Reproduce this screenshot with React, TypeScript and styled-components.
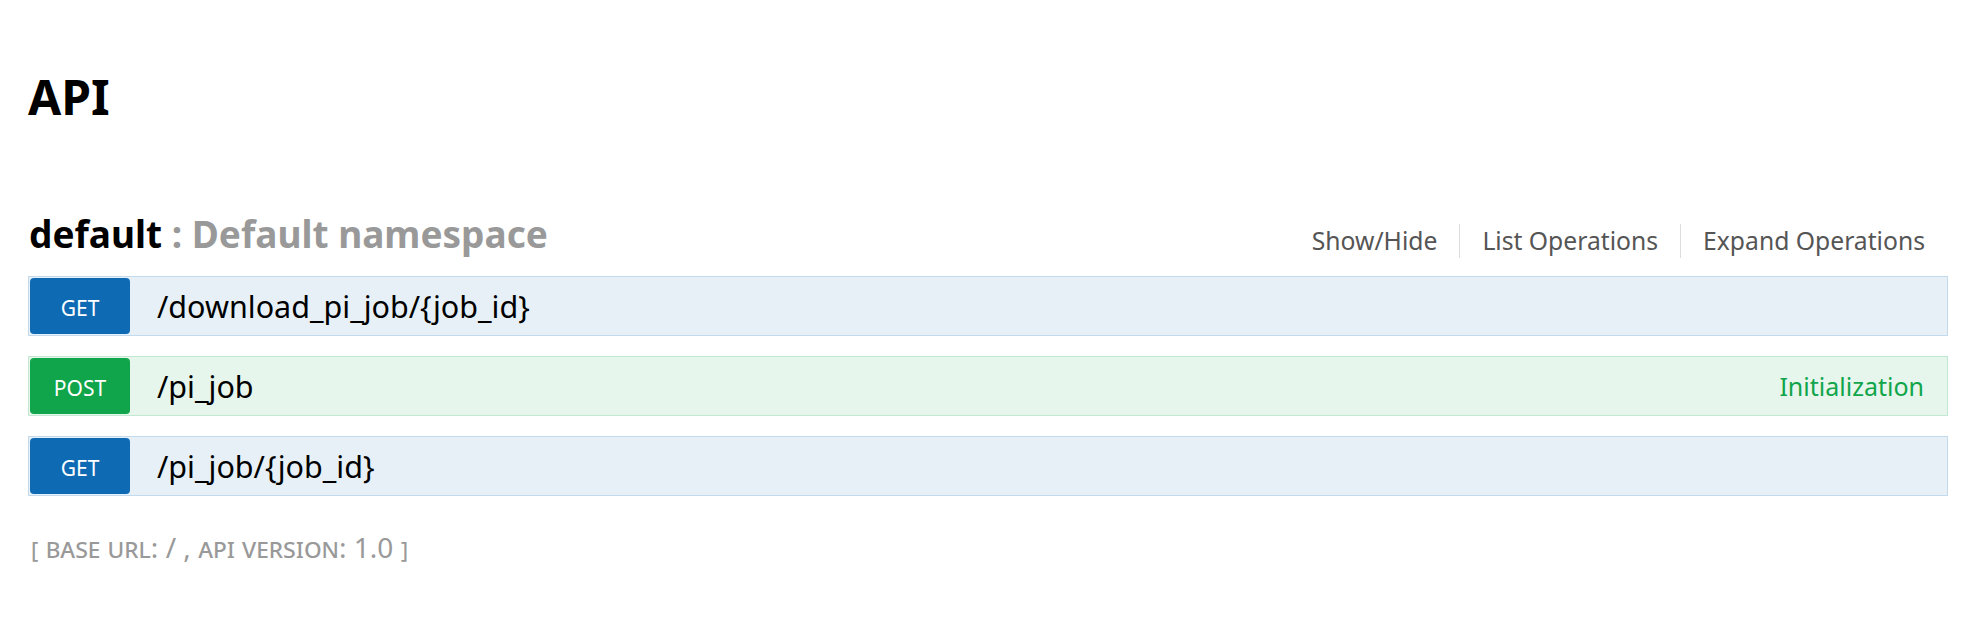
import React from "react";
import styled, { createGlobalStyle } from "styled-components";

const GlobalStyle = createGlobalStyle`
  html, body {
    margin: 0;
    padding: 0;
    background: #ffffff;
  }
  body {
    font-family: "Noto Sans", "Open Sans", "DejaVu Sans", sans-serif;
    color: #000;
  }
`;

const Wrap = styled.div`
  padding: 67px 36px 0 28px;
`;

const Title = styled.h1`
  margin: 0;
  font-size: 48px;
  line-height: 60px;
  font-weight: 700;
  color: #000;
`;

const ResourceHeader = styled.div`
  margin-top: 82px;
  display: flex;
  justify-content: space-between;
  align-items: flex-end;
`;

const ResourceName = styled.h2`
  margin: 0;
  font-size: 37px;
  line-height: 50px;
  font-weight: 700;
  color: #000;
  padding-left: 1px;
`;

const Namespace = styled.span`
  color: #999;
`;

const Options = styled.ul`
  list-style: none;
  margin: 0 23px 1px 0;
  padding: 0;
  display: flex;
`;

const Option = styled.li<{ $last?: boolean }>`
  font-size: 24.7px;
  line-height: 34px;
  color: #555;
  padding: 0 ${(p) => (p.$last ? "0" : "22px")} 0 22px;
  border-right: ${(p) => (p.$last ? "none" : "1px solid #ddd")};
  &:first-child {
    padding-left: 0;
  }
`;

const Operations = styled.div`
  margin-top: 17px;
  display: flex;
  flex-direction: column;
  gap: 20px;
`;

type Method = "get" | "post";

const palette = {
  get: { badge: "#0f6ab4", bg: "#e7f0f7", border: "#c3d9ec" },
  post: { badge: "#10a54a", bg: "#e7f6ec", border: "#c3e8d1" },
};

const OpRow = styled.div<{ $m: Method }>`
  box-sizing: border-box;
  height: 60px;
  padding: 1px 23px 1px 1px;
  display: flex;
  align-items: center;
  background: ${(p) => palette[p.$m].bg};
  border: 1px solid ${(p) => palette[p.$m].border};
`;

const Badge = styled.span<{ $m: Method }>`
  box-sizing: border-box;
  flex: 0 0 100px;
  height: 56px;
  padding-top: 4px;
  display: flex;
  align-items: center;
  justify-content: center;
  border-radius: 4px;
  background: ${(p) => palette[p.$m].badge};
  color: #fff;
  font-size: 21px;
  text-transform: uppercase;
`;

const Path = styled.span`
  margin-left: 27px;
  font-size: 30.5px;
  color: #000;
  flex: 1;
`;

const Summary = styled.span`
  font-size: 25px;
  color: #10a54a;
`;

const Footer = styled.h4`
  margin: 32px 0 0 3px;
  font-size: 28px;
  font-weight: 400;
  color: #999;
  font-variant: small-caps;
`;

const ops: { m: Method; path: string; summary?: string }[] = [
  { m: "get", path: "/download_pi_job/{job_id}" },
  { m: "post", path: "/pi_job", summary: "Initialization" },
  { m: "get", path: "/pi_job/{job_id}" },
];

export default function App() {
  return (
    <>
      <GlobalStyle />
      <Wrap>
        <Title>API</Title>
        <ResourceHeader>
          <ResourceName>
            default <Namespace>: Default namespace</Namespace>
          </ResourceName>
          <Options>
            <Option>Show/Hide</Option>
            <Option>List Operations</Option>
            <Option $last>Expand Operations</Option>
          </Options>
        </ResourceHeader>
        <Operations>
          {ops.map((o, i) => (
            <OpRow key={i} $m={o.m}>
              <Badge $m={o.m}>{o.m}</Badge>
              <Path>{o.path}</Path>
              {o.summary && <Summary>{o.summary}</Summary>}
            </OpRow>
          ))}
        </Operations>
        <Footer>[ base url: / , api version: 1.0 ]</Footer>
      </Wrap>
    </>
  );
}
